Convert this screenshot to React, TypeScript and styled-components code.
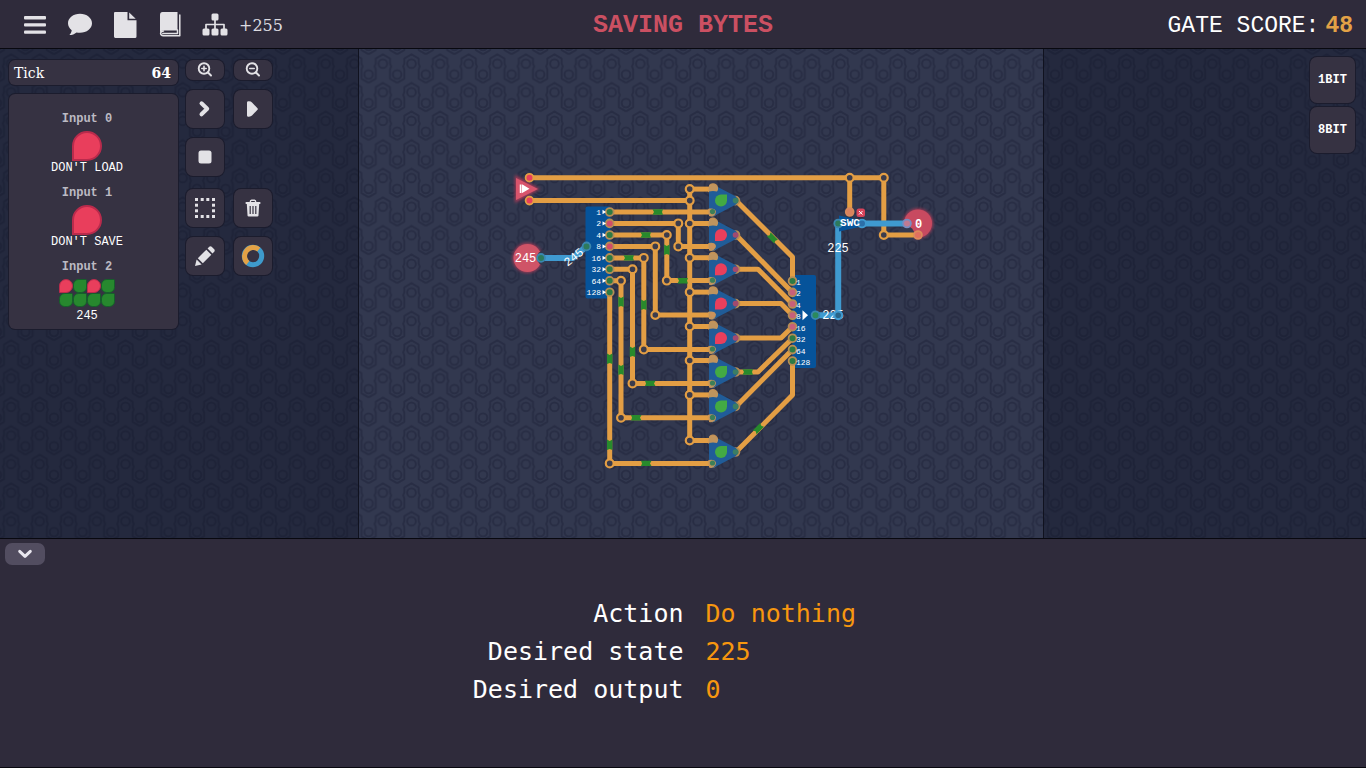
import React from "react";
import styled, { createGlobalStyle } from "styled-components";

const mono = '"Liberation Mono", monospace';
const slab = '"DejaVu Serif", serif';

const GlobalStyle = createGlobalStyle`
  * { box-sizing: border-box; }
  html, body { margin: 0; padding: 0; background: #2f2b3b; }
  button { font: inherit; color: inherit; cursor: pointer; padding: 0; border: 0; }
  h1, h2, p, dl, dt, dd { margin: 0; font: inherit; }
`;

const Page = styled.div`
  display: flex;
  flex-direction: column;
  min-height: 100vh;
  background: #2f2b3b;
  color: #fff;
  font-family: ${mono};
`;

const Header = styled.header`
  display: grid;
  grid-template-columns: 1fr auto 1fr;
  align-items: center;
  height: 49px;
  padding: 3px 13px 0;
  border-bottom: 1px solid #08080f;
`;

const Menu = styled.nav`
  display: flex;
  align-items: center;
  gap: 19px;
  padding: 0 0 2px 9px;
`;

const MenuButton = styled.button`
  display: grid;
  place-items: center;
  width: 26px;
  height: 28px;
  background: none;
  color: #e3e2e6;
`;

const Capacity = styled.span`
  margin-left: -8px;
  padding-top: 2px;
  font: 16px ${slab};
  color: #dcdbe0;
`;

const Title = styled.h1`
  font-size: 25px;
  font-weight: 700;
  color: #cb5062;
`;

const Score = styled.p`
  justify-self: end;
  display: flex;
  gap: 6px;
  padding-top: 1px;
  font-size: 23px;
`;

const ScoreValue = styled.strong`
  color: #e3a246;
`;

const Stage = styled.main`
  position: relative;
  display: flex;
  flex: 1;
  min-height: 489px;
  background: #32384f;
  border-bottom: 1px solid #08080f;
`;

const Backdrop = styled.svg`
  position: absolute;
  inset: 0;
  width: 100%;
  height: 100%;
`;

const Side = styled.aside<{ $width: number }>`
  position: relative;
  display: flex;
  align-items: flex-start;
  width: ${(p) => p.$width}px;
  background: rgba(19, 22, 40, 0.44);
`;

const LeftSide = styled(Side)`
  gap: 8px;
  padding: 11px 0 0 9px;
  border-right: 1px solid #10121f;
`;

const RightSide = styled(Side)`
  flex-direction: column;
  align-items: flex-end;
  gap: 4px;
  padding: 8px 11px 0 0;
  border-left: 1px solid #10121f;
`;

const Board = styled.section`
  position: relative;
  flex: 1;
  min-width: 0;
  display: flex;
`;

const CircuitSvg = styled.svg`
  width: 100%;
  height: 100%;
`;

const Readouts = styled.div`
  display: flex;
  flex-direction: column;
  gap: 9px;
  width: 169px;
`;

const surface = `
  background: #363242;
  box-shadow: 0 0 0 1px #1b1c2d;
`;

const Tick = styled.div`
  ${surface}
  display: flex;
  justify-content: space-between;
  align-items: center;
  height: 25px;
  padding: 0 7px 0 5px;
  border-radius: 6px;
  font: 14px ${slab};
`;

const InputPanel = styled.div`
  ${surface}
  display: flex;
  flex-direction: column;
  align-items: center;
  gap: 11px;
  padding: 18px 13px 6px 0;
  border-radius: 6px;
`;

const InputItem = styled.section`
  display: flex;
  flex-direction: column;
  align-items: center;
  font-size: 12px;
  line-height: 14px;
`;

const InputName = styled.h2`
  margin-bottom: 5px;
  font-weight: 700;
  color: #bcbac3;
`;

const Drop = styled.span<{ $on?: boolean; $size: number }>`
  width: ${(p) => p.$size}px;
  height: ${(p) => p.$size}px;
  background: ${(p) => (p.$on ? "#27882e" : "#e93e5c")};
  border: ${(p) => (p.$size > 20 ? 2 : 1)}px solid ${(p) => (p.$on ? "#155f2b" : "#b92b4c")};
  border-radius: ${(p) => (p.$on ? "40% 10% 40% 40%" : "50% 50% 50% 0")};
`;

const Bits = styled.div`
  display: grid;
  grid-template-columns: repeat(4, 14px);
  padding-bottom: 2px;
`;

const Tools = styled.div`
  display: flex;
  flex-direction: column;
  gap: 10px;
`;

const ToolGroup = styled.div<{ $spaced?: boolean }>`
  display: grid;
  grid-template-columns: 38px 38px;
  gap: 10px;
  padding-top: ${(p) => (p.$spaced ? 3 : 0)}px;
`;

const ToolButton = styled.button<{ $short?: boolean }>`
  ${surface}
  display: grid;
  place-items: center;
  height: ${(p) => (p.$short ? 20 : 38)}px;
  border-radius: 7px;
  color: #e3e2e6;
`;

const PartButton = styled.button`
  ${surface}
  width: 45px;
  height: 46px;
  border-radius: 7px;
  font-size: 12px;
  font-weight: 700;
`;

const Footer = styled.footer`
  display: flex;
  flex-direction: column;
  align-items: flex-start;
  min-height: 229px;
  padding: 4px 5px;
  border-bottom: 1px solid #08080f;
`;

const Collapse = styled.button`
  display: grid;
  place-items: center;
  width: 40px;
  height: 22px;
  border-radius: 7px;
  background: #524d60;
  color: #e8e6ee;
`;

const Details = styled.dl`
  display: grid;
  grid-template-columns: 1fr 1fr;
  column-gap: 22px;
  width: 100%;
  padding: 30px 0 0 23px;
  font: 25px/38px "DejaVu Sans Mono", monospace;
`;

const Term = styled.dt`
  text-align: right;
`;

const Value = styled.dd`
  color: #f7970f;
`;

/* ---------- icons ---------- */

const stroke = { fill: "none", stroke: "currentColor", strokeLinecap: "round", strokeLinejoin: "round" } as const;

const MenuIcon = () => (
  <svg width="26" height="28" viewBox="0 0 26 28" fill="currentColor">
    <rect x="2" y="5" width="22" height="3.4" rx="1" />
    <rect x="2" y="12.2" width="22" height="3.4" rx="1" />
    <rect x="2" y="19.4" width="22" height="3.4" rx="1" />
  </svg>
);
const ChatIcon = () => (
  <svg width="26" height="28" viewBox="0 0 26 28" fill="currentColor">
    <path d="M13 2.8c6.7 0 12 4.200 12 9.500s-5.300 9.500-12 9.500c-1.200 0-2.400-.1-3.500-.4C7.600 23 5 24 2.400 24c1.300-1.300 2.200-3 2.300-4.800C2.400 17.500 1 15 1 12.300 1 7 6.300 2.800 13 2.800z" />
  </svg>
);
const FileIcon = () => (
  <svg width="26" height="28" viewBox="0 0 26 28" fill="currentColor">
    <path d="M3 1h12.500v8.300H24.500V25.500Q24.500 27 23 27H3.300Q2 27 2 25.600V2.200Q2 1 3 1z" />
    <path d="M17.200 1.400l6.500 6.300h-6.500z" />
  </svg>
);
const BookIcon = () => (
  <svg width="26" height="28" viewBox="0 0 26 28">
    <path fill="currentColor" d="M5.500 1H20.500V19.500H6.500Q4 19.600 3 21.500V4Q3 1 5.500 1z" />
    <path {...stroke} strokeWidth="1.500" d="M22.800 4V24.800H6.500Q3.600 24.500 3.600 22.300Q3.800 20 6.500 20M5.800 22.400H20.500V19" />
  </svg>
);
const TreeIcon = () => (
  <svg width="26" height="28" viewBox="0 0 26 28">
    <g fill="currentColor">
      <rect x="9.500" y="2.500" width="7" height="7" rx="1.500" />
      <rect x=".5" y="17.500" width="7" height="7" rx="1.500" />
      <rect x="9.500" y="17.500" width="7" height="7" rx="1.500" />
      <rect x="18.500" y="17.500" width="7" height="7" rx="1.500" />
    </g>
    <path {...stroke} strokeWidth="1.700" d="M13 9v9M4 18v-4.500h18V18" />
  </svg>
);
const ZoomIcon = ({ plus }: { plus?: boolean }) => (
  <svg width="16" height="16" viewBox="0 0 16 16">
    <circle cx="7" cy="6.500" r="5.300" {...stroke} strokeWidth="1.900" />
    <path {...stroke} strokeWidth="2" d="M11 10.500L14 13.500" />
    <path {...stroke} strokeWidth="1.600" d={plus ? "M4.800 6.500h4.400M7 4.300v4.400" : "M4.800 6.500h4.400"} />
  </svg>
);
const StepIcon = () => (
  <svg width="16" height="18" viewBox="0 0 16 18">
    <path {...stroke} strokeWidth="4" d="M4.500 3.300l5.700 5.500L4.500 14.300" />
  </svg>
);
const PlayIcon = () => (
  <svg width="16" height="18" viewBox="0 0 16 18" fill="currentColor">
    <path d="M2 2.500Q2 1 4 1.300Q6 1.400 7 2.500L12.500 8.200Q13.200 9 12.500 9.800L7 15.500Q6 16.600 4 16.700Q2 17 2 15.500z" />
  </svg>
);
const StopIcon = () => (
  <svg width="14" height="14" viewBox="0 0 14 14" fill="currentColor">
    <rect x=".5" y=".5" width="13" height="13" rx="2.500" />
  </svg>
);
const SelectIcon = () => (
  <svg width="20" height="20" viewBox="0 0 20 20" fill="currentColor">
    {[0, 5.7, 11.3, 17].flatMap((a) =>
      [0, 5.7, 11.3, 17]
        .filter((b) => a === 0 || a === 17 || b === 0 || b === 17)
        .map((b) => <rect key={`${a}-${b}`} x={a} y={b} width="3" height="3" />)
    )}
  </svg>
);
const TrashIcon = () => (
  <svg width="16" height="18" viewBox="0 0 16 18">
    <path {...stroke} strokeWidth="1.500" d="M5.300 3.300Q5.300 1.300 6.500 1.300h3Q10.700 1.300 10.700 3.300" />
    <rect x=".5" y="3" width="15" height="2" rx=".8" fill="currentColor" />
    <path fill="currentColor" d="M1.800 5h12.400l-.7 11.400q-.1 1.100-1.200 1.100H3.700q-1.100 0-1.200-1.100z" />
    <path stroke="#363242" strokeWidth="1.200" d="M5.200 7v8M8 7v8M10.800 7v8" />
  </svg>
);
const PencilIcon = () => (
  <svg width="20" height="20" viewBox="0 0 20 20" fill="currentColor">
    <path d="M0 20l1.600-6.600 5 5z" />
    <path d="M2.800 12.200L11.300 3.700l5 5L7.800 17.200z" />
    <path d="M12.600 2.500L14.200.8q1.200-1 2.500 0l2.500 2.500q1 1.200 0 2.500l-1.700 1.700z" />
  </svg>
);
const RingIcon = () => (
  <svg width="24" height="24" viewBox="0 0 24 24" fill="none" strokeWidth="5">
    <circle cx="12" cy="12" r="8.700" stroke="#3e9acb" />
    <path d="M6.800 19A8.700 8.700 0 0 1 17.800 5.500" stroke="#e3a246" />
  </svg>
);
const DownIcon = () => (
  <svg width="16" height="12" viewBox="0 0 16 12">
    <path {...stroke} strokeWidth="3" d="M2.700 3.300l5.300 5 5.300-5" />
  </svg>
);

/* ---------- circuit ---------- */

const ORANGE = "#e39e44";
const BLUE = "#3f9ad0";
const NAVY = "#06539a";
const GREEN = "#288a2c";
const RED = "#e93f5c";

const bitYs = [212, 223.4, 235, 246.4, 257.9, 269.3, 280.8, 292.2];
const gateYs = [200.6, 235, 269.2, 303.6, 338, 372, 406.4, 452];
const gateOn = [true, false, false, false, false, true, true, true];
const joinYs = [281, 292.4, 304, 315.3, 326.7, 338.2, 349.6, 361];
const bitOn = [true, false, true, false, true, true, true, true];
const joinOn = [true, false, false, false, false, true, true, true];
const turnXs = [0, 678.3, 666.8, 655.3, 643.8, 632.5, 621, 609.7];
const bitNames = ["1", "2", "4", "8", "16", "32", "64", "128"];

const outPaths = [
  "M736 200.600L792.500 257V281",
  "M736 235L792.500 292.400",
  "M736 269.200H758L792.500 304",
  "M736 303.600H781L792.500 315.300",
  "M736 338H781L792.500 326.700",
  "M736 372H758L792.500 338.200",
  "M736 406.400L792.500 349.600",
  "M736 452L792.500 395V361",
];

const pulses: [number, number, number][] = [
  [658, 212, 0], [646, 235, 0], [629, 257.9, 0], [683, 280.8, 0], [650, 383.4, 180],
  [636, 417.8, 180], [646, 463.4, 180], [748, 372, 0], [609.7, 359, 90], [609.7, 445, 90],
  [621, 302, 90], [621, 370, 90], [632.5, 352, 90], [643.8, 305, 90], [666.8, 250, 90],
  [772.5, 238, 45], [758.5, 428.5, -45],
];

const Node = ({ x, y, color = ORANGE }: { x: number; y: number; color?: string }) => (
  <circle cx={x} cy={y} r="3.900" fill="#3b3c4c" stroke={color} strokeWidth="2.200" />
);

const Port = ({ x, y, fill, ring = "#b58d55" }: { x: number; y: number; fill: string; ring?: string }) => (
  <circle cx={x} cy={y} r="3.900" fill={fill} stroke={ring} strokeWidth="1.800" />
);

const Gate = ({ y, on }: { y: number; on: boolean }) => (
  <g transform={`translate(721 ${y})`}>
    <path d="M-12-14Q-9-17-6-15L15-4Q18 0 15 4L-6 15Q-9 17-12 14z" fill="#205c98" />
    <path d="M-12-15.500A5 5 0 0 1-4-9L-8-9.500L-12-9zM-12 15.500A5 5 0 0 0-5 11Q-6 7-12 8z" fill="#d09a58" opacity=".9" />
    {on ? (
      <path d="M6-6V0A6 6 0 1 1 0-6z" fill="#43aa43" />
    ) : (
      <path d="M-6 6V0A6 6 0 1 1 0 6z" fill={RED} />
    )}
  </g>
);

const Circuit = () => (
  <CircuitSvg viewBox="359 49 684 489" role="img" aria-label="Circuit">
    <defs>
      <filter id="glow" x="-30%" y="-30%" width="160%" height="160%">
        <feGaussianBlur stdDeviation="1.500" />
      </filter>
    </defs>

    <g fill="#a23a57" filter="url(#glow)">
      <path d="M515 175L540 189L515 203z" />
      <circle cx="527.500" cy="258" r="15" />
      <circle cx="918" cy="223.500" r="15" />
    </g>
    <path d="M516 178L538 189L516 200z" fill="#d8546c" />
    <path d="M520.500 184.500V193M522.500 185.500L528 188.800L522.500 192z" fill="#fff" stroke="#fff" strokeWidth="1.500" />
    <circle cx="527.500" cy="258" r="14" fill="#cf5467" />
    <circle cx="918" cy="223.500" r="14" fill="#c84a60" />
    <circle cx="545" cy="257.900" r="8" fill="#32384f" />
    <circle cx="906" cy="234.500" r="8.500" fill="#32384f" />

    <rect x="585.500" y="206.500" width="25" height="92" rx="2" fill={NAVY} />
    <rect x="792.500" y="275" width="23.500" height="93" rx="2" fill={NAVY} />

    <g fill="none" stroke={ORANGE} strokeWidth="5" strokeLinejoin="round">
      <path d="M529.500 177.700H883.800V235H918M849.700 177.700V212M529.500 200.600H689.700M689.700 189V440.500" />
      {gateYs.map((y) => <path key={y} d={`M689.700 ${y - 11.5}H713`} />)}
      <path d="M609.700 212H713" />
      {bitYs.slice(1).map((y, i) => (
        <path key={y} d={`M609.700 ${y}H${turnXs[i + 1]}V${gateYs[i + 1] + 11.4}H713`} />
      ))}
      {outPaths.map((d) => <path key={d} d={d} />)}
    </g>

    {pulses.map(([x, y, a]) => (
      <path key={`${x}-${y}`} transform={`translate(${x} ${y}) rotate(${a})`} d="M-5.500-2.700H5L4 0L5 2.700H-5.500L-4 0z" fill={GREEN} />
    ))}

    {gateYs.map((y) => <Node key={y} x={689.7} y={y - 11.5} />)}
    <Node x={689.7} y={200.6} />
    <Node x={849.7} y={177.7} />
    <Node x={883.8} y={177.7} />
    <Node x={883.8} y={235} />
    {turnXs.slice(1).map((x, i) => (
      <g key={x}>
        {i < 6 && <Node x={x} y={bitYs[i + 1]} />}
        <Node x={x} y={gateYs[i + 1] + 11.4} />
      </g>
    ))}

    {gateYs.map((y, i) => (
      <g key={y}>
        <Port x={712.5} y={y - 11} fill="#c98a59" ring="#d49a52" />
        <Port x={712.5} y={y + 11} fill={bitOn[i] ? "#4f8a4c" : "#c98a59"} ring="#d49a52" />
        <Port x={735.5} y={y} fill={gateOn[i] ? "#3a7d55" : "#b45268"} />
        <Gate y={y} on={gateOn[i]} />
        <circle cx="712.500" cy={y + 11} r="2.600" fill={bitOn[i] ? "#3c7f58" : "#c9925c"} />
        <circle cx="735.500" cy={y} r="2.800" fill={gateOn[i] ? "#3a7d65" : "#a04a70"} />
      </g>
    ))}
    {bitYs.map((y, i) => <Port key={y} x={609.7} y={y} fill={bitOn[i] ? "#2d7a44" : "#d14c68"} />)}
    {joinYs.map((y, i) => <Port key={y} x={792.5} y={y} fill={joinOn[i] ? "#2d7a44" : "#c8607a"} />)}
    <Port x={529.5} y={177.7} fill={RED} ring={ORANGE} />
    <Port x={529.5} y={200.6} fill={RED} ring={ORANGE} />
    <Port x={849.7} y={212} fill="#d9825f" ring="#d98a5c" />

    <g fill="none" stroke={BLUE} strokeWidth="6" strokeLinejoin="round">
      <path d="M541 257.900H573L586.500 246.400" />
      <path d="M815.500 315.200H838.200V223.500M862 223.500H907" />
    </g>
    <path d="M839 215.500L864 221V226L839 231.500z" fill={NAVY} />
    <Port x={862} y={223.5} fill="#2b6fa8" ring={BLUE} />
    <Port x={541} y={257.9} fill="#2d7a5c" ring="#3a86ae" />
    <Port x={586.5} y={246.4} fill="#2d7a5c" ring="#3a86ae" />
    <Port x={815.5} y={315.2} fill="#2b8a5c" ring="#3a86ae" />
    <Port x={838.2} y={223.5} fill="#2d7a5c" ring="#3a86ae" />
    <Port x={907} y={223.5} fill="#c07a92" ring="#7a8cc0" />
    <Port x={918} y={235} fill="#e0705f" ring="#dc8a5c" />

    <g fontFamily="Liberation Mono, monospace" fill="#fff">
      <g fontSize="8">
        {bitYs.map((y, i) => (
          <g key={y}>
            <text x="601" y={y + 3} textAnchor="end">{bitNames[i]}</text>
            <path d={`M602.500 ${y - 2.2}L606 ${y}L602.500 ${y + 2.2}z`} />
            <text x="796" y={joinYs[i] + 4}>{bitNames[i]}</text>
          </g>
        ))}
      </g>
      <path d="M802.500 310.300L808 315.200L802.500 320.200z" />
      <g fontSize="12" textAnchor="middle">
        <text x="525.500" y="262">245</text>
        <text transform="translate(573.500 257) rotate(-38)" y="4">245</text>
        <text x="833" y="319">225</text>
        <text x="838" y="252">225</text>
        <text x="918.500" y="228" fontWeight="700">0</text>
      </g>
      <text x="850" y="226" fontSize="11" fontWeight="700" textAnchor="middle">SWC</text>
    </g>
    <circle cx="838.200" cy="315.200" r="3.900" fill="#2a6488" stroke={BLUE} strokeWidth="2.200" />
    <rect x="856.500" y="208.500" width="8.500" height="8.500" rx="2.500" fill="#d8435a" />
    <path d="M859 211L862.500 214.500M862.500 211L859 214.500" stroke="#fff" strokeWidth="1" />
  </CircuitSvg>
);

const TILE = 28.6;

/* One period of the honeycomb wave: an arch over the upper cell, a cup under the lower one. */
const HexMotif = ({ y }: { y: number }) => (
  <g transform={`translate(0 ${y})`}>
    <path d="M0 33.800L7.200 29.700V20.500L6 17.500L7.200 14.500V9.500L14.300 5.300L21.400 9.500V14.500L22.600 17.500L21.400 20.500V29.700L28.600 33.800" />
    <circle cx="14.300" cy="14.700" r="4.300" />
    <circle cx="0" cy="25.500" r="4.300" />
    <circle cx={TILE} cy="25.500" r="4.300" />
  </g>
);

const HexBackdrop = () => (
  <Backdrop aria-hidden="true">
    <defs>
      <pattern id="hex" width={TILE} height={TILE} patternUnits="userSpaceOnUse" x="-3.200" y="0">
        <g fill="none" stroke="#282d44" strokeWidth="2" strokeLinejoin="round">
          <HexMotif y={0} />
          <HexMotif y={-TILE} />
        </g>
      </pattern>
    </defs>
    <rect width="100%" height="100%" fill="url(#hex)" />
  </Backdrop>
);

const menuItems = [
  { label: "Menu", Icon: MenuIcon },
  { label: "Chat", Icon: ChatIcon },
  { label: "File", Icon: FileIcon },
  { label: "Manual", Icon: BookIcon },
  { label: "Levels", Icon: TreeIcon },
];

const details = [
  ["Action", "Do nothing"],
  ["Desired state", "225"],
  ["Desired output", "0"],
];

const inputBits = [false, true, false, true, true, true, true, true];

export default function App() {
  return (
    <Page>
      <GlobalStyle />
      <Header>
        <Menu>
          {menuItems.map(({ label, Icon }) => (
            <MenuButton key={label} aria-label={label}><Icon /></MenuButton>
          ))}
          <Capacity>+255</Capacity>
        </Menu>
        <Title>SAVING BYTES</Title>
        <Score>GATE SCORE:<ScoreValue>48</ScoreValue></Score>
      </Header>

      <Stage>
        <HexBackdrop />
        <LeftSide $width={359}>
          <Readouts>
            <Tick><span>Tick</span><b>64</b></Tick>
            <InputPanel>
              <InputItem>
                <InputName>Input 0</InputName>
                <Drop $size={30} />
                <p>DON'T LOAD</p>
              </InputItem>
              <InputItem>
                <InputName>Input 1</InputName>
                <Drop $size={30} />
                <p>DON'T SAVE</p>
              </InputItem>
              <InputItem>
                <InputName>Input 2</InputName>
                <Bits>{inputBits.map((on, i) => <Drop key={i} $size={14} $on={on} />)}</Bits>
                <p>245</p>
              </InputItem>
            </InputPanel>
          </Readouts>
          <Tools>
            <ToolGroup>
              <ToolButton $short aria-label="Zoom in"><ZoomIcon plus /></ToolButton>
              <ToolButton $short aria-label="Zoom out"><ZoomIcon /></ToolButton>
              <ToolButton aria-label="Step"><StepIcon /></ToolButton>
              <ToolButton aria-label="Run"><PlayIcon /></ToolButton>
              <ToolButton aria-label="Stop"><StopIcon /></ToolButton>
            </ToolGroup>
            <ToolGroup $spaced>
              <ToolButton aria-label="Select"><SelectIcon /></ToolButton>
              <ToolButton aria-label="Delete"><TrashIcon /></ToolButton>
              <ToolButton aria-label="Draw wire"><PencilIcon /></ToolButton>
              <ToolButton aria-label="Wire colour"><RingIcon /></ToolButton>
            </ToolGroup>
          </Tools>
        </LeftSide>
        <Board><Circuit /></Board>
        <RightSide $width={323}>
          <PartButton>1BIT</PartButton>
          <PartButton>8BIT</PartButton>
        </RightSide>
      </Stage>

      <Footer>
        <Collapse aria-label="Collapse panel"><DownIcon /></Collapse>
        <Details>
          {details.map(([term, value]) => (
            <React.Fragment key={term}>
              <Term>{term}</Term>
              <Value>{value}</Value>
            </React.Fragment>
          ))}
        </Details>
      </Footer>
    </Page>
  );
}
